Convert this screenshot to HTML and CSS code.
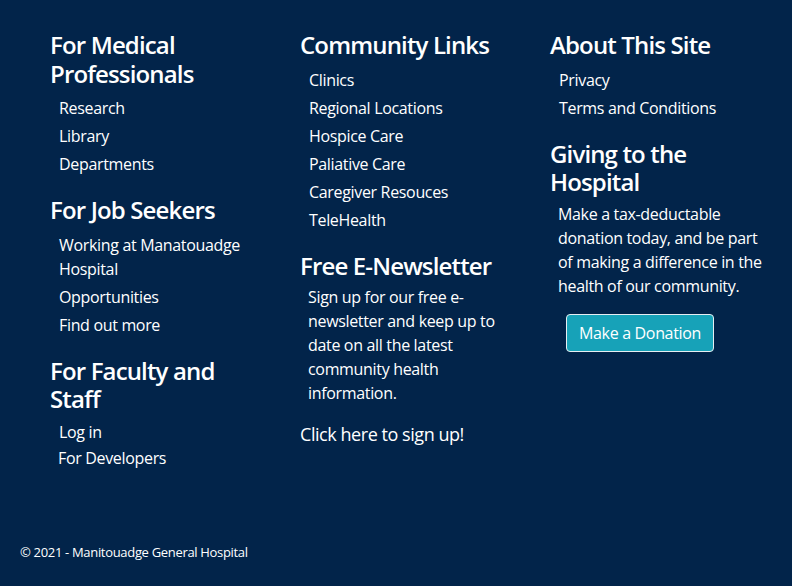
FILE: index.html
```html
<!DOCTYPE html>
<html lang="en">
<head>
<meta charset="utf-8">
<title>Manitouadge General Hospital</title>
<link rel="stylesheet" href="styles.css">
</head>
<body>
<div class="page">
  <div class="columns">
    <div class="col">
      <h4 class="heading">For Medical Professionals</h4>
      <ul class="links">
        <li>Research</li>
        <li>Library</li>
        <li>Departments</li>
      </ul>
      <h4 class="heading">For Job Seekers</h4>
      <ul class="links">
        <li>Working at Manatouadge Hospital</li>
        <li>Opportunities</li>
        <li>Find out more</li>
      </ul>
      <h4 class="heading">For Faculty and Staff</h4>
      <ul class="links">
        <li class="login">Log in</li>
        <li class="dev">For Developers</li>
      </ul>
    </div>
    <div class="col">
      <h4 class="heading">Community Links</h4>
      <ul class="links">
        <li>Clinics</li>
        <li>Regional Locations</li>
        <li>Hospice Care</li>
        <li>Paliative Care</li>
        <li>Caregiver Resouces</li>
        <li>TeleHealth</li>
      </ul>
      <h4 class="heading">Free E-Newsletter</h4>
      <p class="blurb">Sign up for our free e-newsletter and keep up to date on all the latest community health information.</p>
      <a class="signup">Click here to sign up!</a>
    </div>
    <div class="col">
      <h4 class="heading">About This Site</h4>
      <ul class="links">
        <li>Privacy</li>
        <li>Terms and Conditions</li>
      </ul>
      <h4 class="heading">Giving to the Hospital</h4>
      <p class="blurb">Make a tax-deductable donation today, and be part of making a difference in the health of our community.</p>
      <button class="donate">Make a Donation</button>
    </div>
  </div>
  <footer class="footer">&copy; 2021 - Manitouadge General Hospital</footer>
</div>
</body>
</html>
```
FILE: styles.css
```css
html, body {
  margin: 0;
  padding: 0;
  background: #02244a;
}
body {
  font-family: "Open Sans", "Noto Sans", sans-serif;
  color: #ffffff;
  font-size: 16px;
  line-height: 24px;
  letter-spacing: -0.33px;
}
.page {
  min-height: 586px;
  display: flex;
  flex-direction: column;
  box-sizing: border-box;
}
.columns {
  display: grid;
  grid-template-columns: 220px 220px 220px;
  column-gap: 30px;
  padding: 31px 0 0 50px;
}
.heading {
  font-size: 24px;
  line-height: 28.5px;
  font-weight: 600;
  letter-spacing: -0.85px;
  margin: 0 0 8px 0;
  padding-right: 8px;
}
.links {
  list-style: none;
  margin: 0 0 16px 0;
  padding: 0 0 0 9px;
}
.links li {
  margin-bottom: 4px;
}
.links .login {
  margin-top: -2px;
  margin-bottom: 2px;
}
.links .dev {
  margin-left: -1px;
}
.blurb {
  margin: -3px 0 16px 0;
  padding-left: 8px;
}
.signup {
  display: block;
  font-size: 18px;
  line-height: 27px;
  letter-spacing: -0.45px;
}
.donate {
  margin-left: 16px;
  align-self: flex-start;
  font-family: inherit;
  font-size: 16px;
  line-height: 24px;
  letter-spacing: -0.33px;
  padding: 6px 12px;
  color: #ffffff;
  background: #17a2b8;
  border: 1px solid #e6eef2;
  border-radius: 4px;
}
.col {
  display: flex;
  flex-direction: column;
  align-items: stretch;
}
.footer {
  margin-top: auto;
  padding: 0 0 24px 20px;
  font-size: 13px;
  line-height: 20px;
  letter-spacing: -0.32px;
}
```
